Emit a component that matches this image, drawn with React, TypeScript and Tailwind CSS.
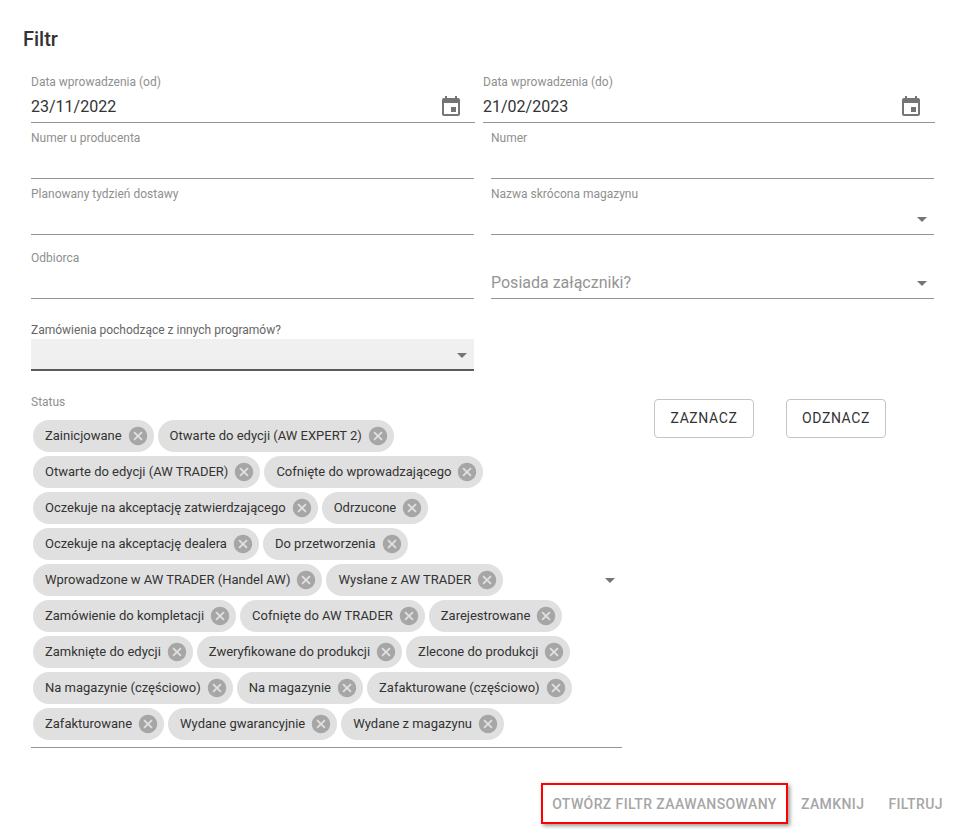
import React from 'react'

const chipRows = [
  'Zainicjowane',
  'Otwarte do edycji (AW EXPERT 2)',
  'Otwarte do edycji (AW TRADER)',
  'Cofnięte do wprowadzającego',
  'Oczekuje na akceptację zatwierdzającego',
  'Odrzucone',
  'Oczekuje na akceptację dealera',
  'Do przetworzenia',
  'Wprowadzone w AW TRADER (Handel AW)',
  'Wysłane z AW TRADER',
  'Zamówienie do kompletacji',
  'Cofnięte do AW TRADER',
  'Zarejestrowane',
  'Zamknięte do edycji',
  'Zweryfikowane do produkcji',
  'Zlecone do produkcji',
  'Na magazynie (częściowo)',
  'Na magazynie',
  'Zafakturowane (częściowo)',
  'Zafakturowane',
  'Wydane gwarancyjnie',
  'Wydane z magazynu',
]

function Arrow({ className = '' }: { className?: string }) {
  return (
    <svg width="24" height="24" viewBox="0 0 24 24" className={'fill-[#757575] ' + className}>
      <path d="M7 10l5 5 5-5z" />
    </svg>
  )
}

function CalendarIcon() {
  return (
    <svg width="24" height="24" viewBox="0 0 24 24" className="fill-[#757575]">
      <path d="M17 12h-5v5h5v-5zM16 1v2H8V1H6v2H5c-1.11 0-1.99.9-1.99 2L3 19c0 1.1.89 2 2 2h14c1.1 0 2-.9 2-2V5c0-1.1-.9-2-2-2h-1V1h-2zm3 18H5V8h14v11z" />
    </svg>
  )
}

function DateField({ label, value, className }: { label: string; value: string; className: string }) {
  return (
    <div className={'h-[48px] flex flex-col border-b border-[#949494] ' + className}>
      <div className="text-xs leading-[14px] text-[#8f8f8f]">{label}</div>
      <div className="flex items-center justify-between h-[33px] pt-[2px] pr-3 text-base text-[#333333]">
        <span>{value}</span>
        <CalendarIcon />
      </div>
    </div>
  )
}

function Field({ label, tall, select }: { label: string; tall?: boolean; select?: boolean }) {
  return (
    <div className={'w-[443px] flex flex-col border-b border-[#949494] ' + (tall ? 'h-[64px] pt-4' : 'h-[56px] pt-2')}>
      <div className="text-xs leading-[14px] text-[#8f8f8f]">{label}</div>
      {select && (
        <div className="flex justify-end mt-[6px]">
          <Arrow />
        </div>
      )}
    </div>
  )
}

function Chip({ text }: { text: string }) {
  return (
    <div className="h-8 rounded-full bg-[#e0e0e0] flex items-center pl-3 pr-[5px] text-[13px] text-[#333333] whitespace-nowrap">
      <span className="mr-[5px]">{text}</span>
      <svg width="22" height="22" viewBox="0 0 24 24" className="fill-[#a6a6a6]">
        <path d="M12 2C6.47 2 2 6.47 2 12s4.47 10 10 10 10-4.47 10-10S17.53 2 12 2zm5 13.59L15.59 17 12 13.41 8.41 17 7 15.59 10.59 12 7 8.41 8.41 7 12 10.59 15.59 7 17 8.41 13.41 12 17 15.59z" />
      </svg>
    </div>
  )
}

export default function App() {
  return (
    <div className="w-[959px] h-[830px] bg-white font-['Roboto',sans-serif] overflow-hidden">
      {/* Title */}
      <h2 className="pl-[23px] pt-[27px] text-xl leading-[24px] font-medium text-[#333333] h-[75px]">Filtr</h2>

      <div className="pl-[31px]">
        {/* Dates */}
        <div className="flex gap-2">
          <DateField label="Data wprowadzenia (od)" value="23/11/2022" className="w-[444px]" />
          <DateField label="Data wprowadzenia (do)" value="21/02/2023" className="w-[452px]" />
        </div>

        {/* Text fields */}
        <div className="flex gap-[17px]">
          <Field label="Numer u producenta" />
          <Field label="Numer" />
        </div>
        <div className="flex gap-[17px]">
          <Field label="Planowany tydzień dostawy" />
          <Field label="Nazwa skrócona magazynu" select />
        </div>
        <div className="flex gap-[17px]">
          <Field label="Odbiorca" tall />
          <div className="w-[443px] h-[64px] flex items-end justify-between border-b border-[#949494] pb-[3px]">
            <span className="text-base leading-[24px] text-[#949494]">Posiada załączniki?</span>
            <Arrow />
          </div>
        </div>

        {/* Filled select */}
        <div className="w-[443px] pt-6">
          <div className="text-xs leading-[14px] text-[#666666]">Zamówienia pochodzące z innych programów?</div>
          <div className="mt-[2px] h-8 pt-[2px] bg-[#f0f0f0] border-b-2 border-[#5c5c5c] flex items-center justify-end">
            <Arrow />
          </div>
        </div>

        {/* Status */}
        <div className="flex mt-6">
          <div className="relative w-[591px] h-[353px] border-b border-[#949494]">
            <div className="text-xs leading-[14px] text-[#8f8f8f]">Status</div>
            <div className="flex flex-wrap gap-1 px-[2px] pt-[11px] w-[570px]">
              {chipRows.map((c) => (
                <Chip key={c} text={c} />
              ))}
            </div>
            <Arrow className="absolute right-0 top-[173px]" />
          </div>
          <div className="flex gap-8 ml-8 mt-1">
            <button className="w-[100px] h-[39px] pb-[2px] border border-[#c4c4c4] rounded text-sm tracking-[0.6px] text-[#333333]">ZAZNACZ</button>
            <button className="w-[100px] h-[39px] pb-[2px] border border-[#c4c4c4] rounded text-sm tracking-[0.6px] text-[#333333]">ODZNACZ</button>
          </div>
        </div>
      </div>

      {/* Actions */}
      <div className="flex justify-end items-center pr-2 mt-[35px]">
        <button className="w-[247px] h-[41px] border-2 border-[#ff0000] shadow-[2px_2px_4px_rgba(0,0,0,0.4)] text-sm font-medium tracking-[0.4px] text-[#a6a6a6] mr-[5px]">OTWÓRZ FILTR ZAAWANSOWANY</button>
        <div className="flex gap-2">
          <button className="px-2 h-9 text-sm font-medium tracking-[0.4px] text-[#a6a6a6]">ZAMKNIJ</button>
          <button className="px-2 h-9 text-sm font-medium tracking-[0.4px] text-[#a6a6a6]">FILTRUJ</button>
        </div>
      </div>
    </div>
  )
}
